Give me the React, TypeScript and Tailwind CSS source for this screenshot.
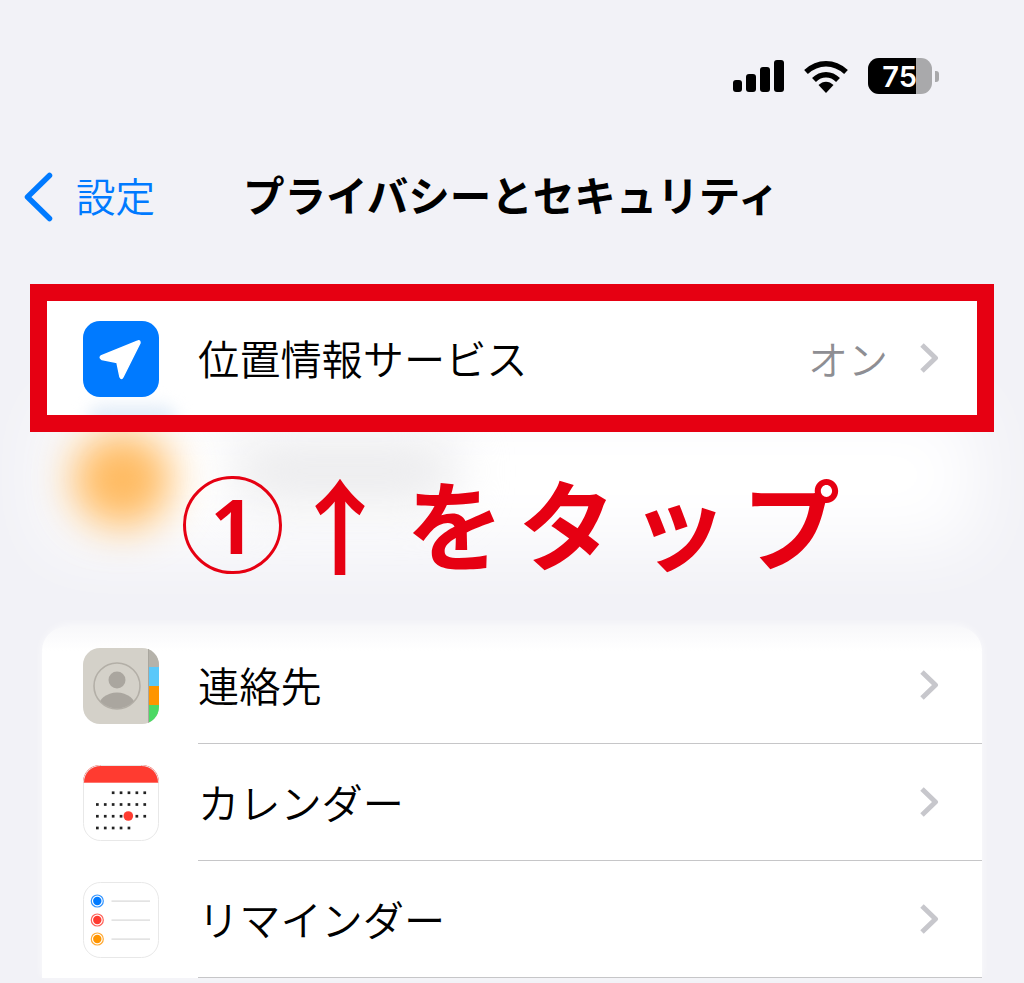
import React from 'react';

const jp = { fontFamily: '"Noto Sans CJK JP", "Noto Sans", sans-serif' };

function RowChevron() {
  return (
    <svg width="20" height="32" viewBox="0 0 20 32" className="block">
      <path d="M3 3 L16.500 16 L3 29" fill="none" stroke="#c7c7cc" strokeWidth="5" strokeLinejoin="round" />
    </svg>
  );
}

function LocationIcon() {
  return (
    <div className="w-[76px] h-[76px] rounded-[17px] bg-[#007aff] flex items-center justify-center">
      <svg width="76" height="76" viewBox="0 0 76 76">
        <path d="M55 20 L18 35 Q16 37 19 38.500 L34 41.500 L37 56 Q38.500 59 40 56 L57 22 Q57 19 55 20 Z" fill="#fff" stroke="#fff" strokeWidth="1.500" strokeLinejoin="round" />
      </svg>
    </div>
  );
}

function ContactsIcon() {
  return (
    <svg width="76" height="76" viewBox="0 0 76 76">
      <defs>
        <clipPath id="contacts-clip"><rect width="76" height="76" rx="17" /></clipPath>
        <clipPath id="contacts-ring"><circle cx="34" cy="38" r="22.500" /></clipPath>
      </defs>
      <g clipPath="url(#contacts-clip)">
        <rect width="76" height="76" fill="#d4d1c9" />
        <rect x="65" y="0" width="11" height="19" fill="#b5b2aa" />
        <rect x="66" y="19" width="10" height="19" fill="#5ac8fa" />
        <rect x="66" y="38" width="10" height="19" fill="#ff9500" />
        <rect x="66" y="57" width="10" height="19" fill="#4cd964" />
        <rect x="65" y="0" width="1" height="76" fill="#a9a69e" />
        <circle cx="34" cy="38" r="23" fill="none" stroke="#b3afa7" strokeWidth="1.600" />
        <circle cx="34" cy="32" r="8.500" fill="#aaa69f" />
        <g clipPath="url(#contacts-ring)">
          <ellipse cx="34" cy="60" rx="19" ry="15.500" fill="#aaa69f" />
        </g>
      </g>
    </svg>
  );
}

function CalendarIcon() {
  const dotRows = [
    [false, false, true, true, true, true, true],
    [true, true, true, true, true, true, true],
    [true, true, true, true, false, true, true],
    [true, true, true, true, true, false, false],
  ];
  return (
    <svg width="76" height="76" viewBox="0 0 76 76">
      <defs>
        <clipPath id="calendar-clip"><rect width="76" height="76" rx="17" /></clipPath>
      </defs>
      <g clipPath="url(#calendar-clip)">
        <rect width="76" height="76" fill="#fff" />
        <rect width="76" height="17.700" fill="#ff3b30" />
      </g>
      <rect x="0.500" y="0.500" width="75" height="75" rx="17" fill="none" stroke="#e8e8e8" />
      {dotRows.map((row, y) =>
        row.map((on, x) =>
          on ? <rect key={`${x}-${y}`} x={13 + x * 7.900} y={26.400 + y * 11.750} width="2.700" height="2.700" fill="#222" /> : null
        )
      )}
      <circle cx="45.300" cy="51" r="4.800" fill="#ff3b30" />
    </svg>
  );
}

function RemindersIcon() {
  const dots = ['#007aff', '#ff3b30', '#ff9500'];
  return (
    <svg width="76" height="76" viewBox="0 0 76 76">
      <rect x="0.500" y="0.500" width="75" height="75" rx="17" fill="#fff" stroke="#e8e8e8" />
      {dots.map((c, i) => (
        <g key={c}>
          <circle cx="14.300" cy={19 + i * 19} r="6" fill="none" stroke={c} strokeOpacity="0.800" strokeWidth="1.200" />
          <circle cx="14.300" cy={19 + i * 19} r="4.200" fill={c} />
          <rect x="28.500" y={18.500 + i * 19} width="38.500" height="1.200" fill="#d8d8d8" />
        </g>
      ))}
    </svg>
  );
}

const rows = [
  { label: '連絡先', icon: <ContactsIcon /> },
  { label: 'カレンダー', icon: <CalendarIcon /> },
  { label: 'リマインダー', icon: <RemindersIcon /> },
];

export default function App() {
  return (
    <div className="relative w-[1024px] h-[983px] overflow-hidden bg-[#f2f2f7] text-black" style={jp}>
      {/* blurred icons behind the annotation */}
      <div className="absolute left-[50px] top-[405px] w-[925px] h-[140px] bg-white blur-[35px]" />
      <div className="absolute left-[230px] top-[436px] w-[230px] h-[70px] rounded-full bg-[#ececee] blur-[25px]" />
      <div className="absolute left-[72px] top-[432px] w-[100px] h-[95px] rounded-full bg-[#ffbb62] blur-[20px]" />

      {/* status bar */}
      <div className="relative flex justify-end items-center h-[94px] pt-[58px] pr-[85px]">
        <div className="flex items-end gap-[4px] h-[32px] mr-[20px]">
          <div className="w-[9px] h-[12px] rounded-[3px] bg-black" />
          <div className="w-[10px] h-[18px] rounded-[3px] bg-black" />
          <div className="w-[10px] h-[25px] rounded-[3px] bg-black" />
          <div className="w-[10px] h-[32px] rounded-[3px] bg-black" />
        </div>
        <svg width="44" height="33" viewBox="0 0 44 33" className="mr-[20px]">
          <path d="M2 12 C14 1 30 1 42 12" fill="none" stroke="#000" strokeWidth="5.500" />
          <path d="M10 20 C17 13 27 13 34 20" fill="none" stroke="#000" strokeWidth="5.500" />
          <path d="M14.500 25 C19 20.500 25 20.500 29.500 25 L22 33 Z" fill="#000" />
        </svg>
        <div className="relative flex items-center w-[64px] h-[36px] rounded-[11px] overflow-hidden bg-[#a9a9ab]">
          <div className="flex items-center justify-end w-[48px] h-full bg-black text-white text-[29px] leading-none font-semibold" style={{ fontFamily: 'Inter, sans-serif' }}>
            <span className="mr-[-1px]">75</span>
          </div>
        </div>
        <div className="w-[4px] h-[11px] rounded-r-[3px] bg-[#a9a9ab] ml-[3px]" />
      </div>

      {/* nav */}
      <div className="relative flex items-center h-[96px] mt-[55px] pl-[24px]">
        <svg width="30" height="50" viewBox="0 0 30 50" className="shrink-0">
          <path d="M25.500 3.500 L3.500 25 L25.500 46.500" fill="none" stroke="#007aff" strokeWidth="5.500" strokeLinecap="round" strokeLinejoin="round" />
        </svg>
        <span className="ml-[22px] mb-[5px] text-[39.500px] leading-none font-[350] text-[#007aff]">設定</span>
        <span className="ml-[88px] mb-[5px] text-[41.500px] leading-none font-bold whitespace-nowrap">プライバシーとセキュリティ</span>
      </div>

      {/* highlighted row */}
      <div className="relative flex items-center h-[148px] mx-[30px] mt-[39px] pl-[36px] pr-[38px] bg-white border-[17px] border-[#e60012] overflow-hidden">
        <div className="absolute left-[40px] bottom-[-20px] w-[90px] h-[30px] rounded-full bg-[#e3edf8] blur-[8px]" />
        <div className="relative mt-[2px]"><LocationIcon /></div>
        <span className="relative ml-[39px] text-[41.200px] leading-none font-[350]">位置情報サービス</span>
        <span className="relative ml-auto text-[40px] leading-none font-[350] text-[#8e8e93]">オン</span>
        <div className="relative ml-[31px]"><RowChevron /></div>
      </div>

      {/* annotation */}
      <div className="relative flex items-center h-[195px] pl-[183px] pb-[20px] text-[#e60012] font-bold leading-none whitespace-nowrap">
        <div className="flex items-center justify-center w-[99px] h-[98px] mt-[10px] rounded-full border-[3px] border-[#e60012] text-[76px]" style={{ fontFamily: '"Noto Sans", sans-serif' }}>
          1
        </div>
        <span className="ml-[6px] mt-[5px] text-[104px]">↑</span>
        <span className="ml-[14px] text-[98px] tracking-[14px]">をタップ</span>
      </div>

      {/* list */}
      <div className="relative mx-[42px] bg-white rounded-t-[28px] shadow-[0_-2px_8px_rgba(255,255,255,0.7)]">
        <div className="absolute inset-x-0 top-0 h-[24px] rounded-t-[28px] bg-gradient-to-b from-[#f8f8fa] to-white" />
        {rows.map(r => (
          <div key={r.label} className="relative flex items-center h-[117px] pl-[41px]">
            <div className="w-[76px] h-[76px] shrink-0">{r.icon}</div>
            <div className="flex items-center flex-1 h-full ml-[39px] pr-[43px] border-b border-[#c6c6c8]">
              <span className="text-[41.200px] leading-none font-[350]">{r.label}</span>
              <div className="ml-auto"><RowChevron /></div>
            </div>
          </div>
        ))}
      </div>
    </div>
  );
}
